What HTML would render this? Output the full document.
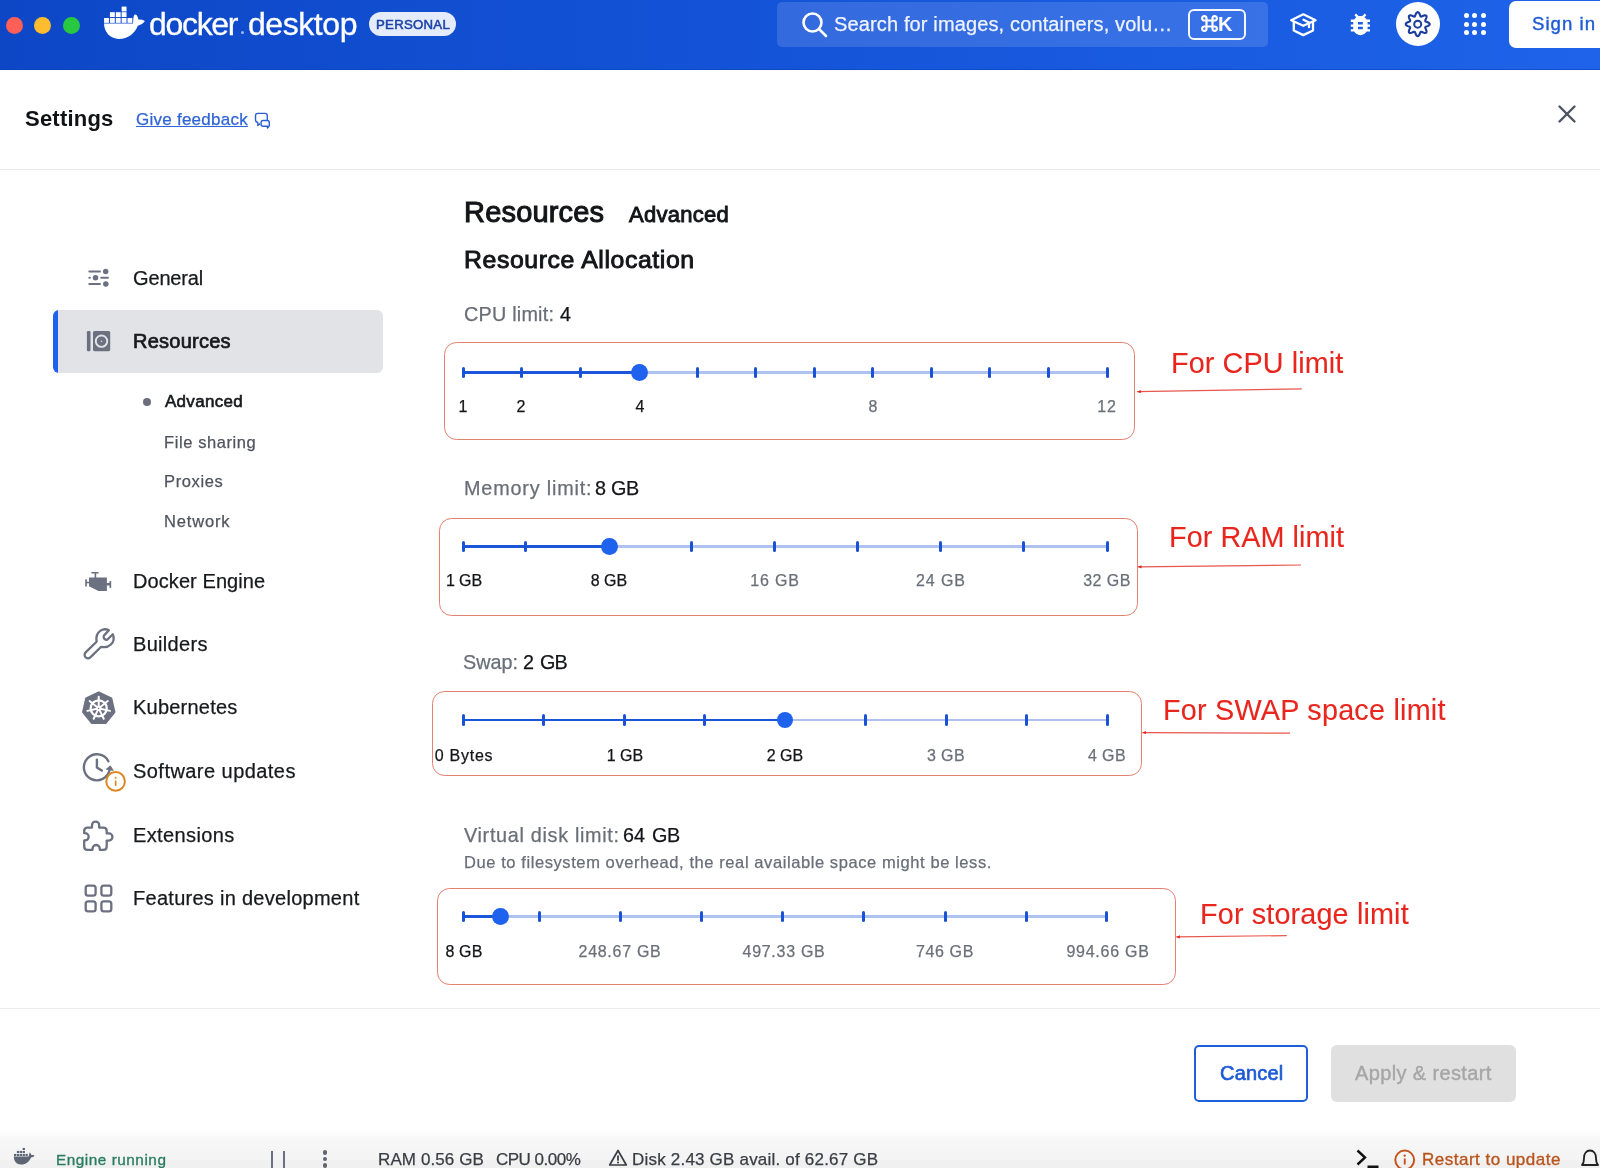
<!DOCTYPE html>
<html><head><meta charset="utf-8"><title>Docker Desktop Settings</title>
<style>
html,body{margin:0;padding:0;width:1600px;height:1168px;overflow:hidden;background:#fff;}
body{position:relative;font-family:"Liberation Sans",sans-serif;}
.t{position:absolute;line-height:1;white-space:nowrap;will-change:transform;}
.a{position:absolute;}
</style></head><body>
<div class='a' style='left:0;top:0;width:1600px;height:70px;background:linear-gradient(90deg,#0d47c6 0%,#1250d3 35%,#185ae0 70%,#1e63e9 100%);'></div>
<div class='a' style='left:0;top:69px;width:1600px;height:1px;background:#0b43b8;opacity:.6'></div>
<div class='a' style='left:5.699999999999999px;top:17.2px;width:17px;height:17px;border-radius:50%;background:#fe5f57'></div>
<div class='a' style='left:34.3px;top:17.2px;width:17px;height:17px;border-radius:50%;background:#febc2e'></div>
<div class='a' style='left:62.900000000000006px;top:17.2px;width:17px;height:17px;border-radius:50%;background:#28c840'></div>
<svg class='a' style='left:100px;top:4px' width='50' height='40' viewBox='100 4 50 40'>
<g fill='#fff'><rect x='104.10' y='18.0' width='4.85' height='4.85'/><rect x='109.95' y='18.0' width='4.85' height='4.85'/><rect x='115.80' y='18.0' width='4.85' height='4.85'/><rect x='121.65' y='18.0' width='4.85' height='4.85'/><rect x='127.50' y='18.0' width='4.85' height='4.85'/><rect x='109.95' y='12.2' width='4.85' height='4.85'/><rect x='115.80' y='12.2' width='4.85' height='4.85'/><rect x='121.65' y='12.2' width='4.85' height='4.85'/><rect x='121.65' y='6.6' width='4.85' height='4.85'/>
<path d='M104 23.6 H133 C133.2 21.5 133.3 18.5 133.7 16.2 C134.3 14.2 135.8 13.9 136.8 15.3 C137.6 16.5 138.1 18 138.4 19.6 C140.6 19.4 142.8 19.9 144.9 21 C143.6 23.4 140.6 24.8 137.8 25.7 C135 33.2 128 38.9 118.8 38.9 C110 38.9 104.2 32.2 104 23.6 Z'/>
</g></svg>
<div class='a' style='left:240.5px;top:31px;width:3px;height:3px;border-radius:50%;background:#9fb6ee'></div>
<div class='a' style='left:368.6px;top:12.4px;width:87.4px;height:23.6px;border-radius:12px;background:#e4ebfb'></div>
<div class='a' style='left:776.8px;top:1.6px;width:491.4px;height:45.4px;border-radius:5px;background:rgba(255,255,255,0.135)'></div>
<svg class='a' style='left:800px;top:10px' width='30' height='30' viewBox='0 0 30 30'>
<circle cx='12.5' cy='12.5' r='9' fill='none' stroke='#fff' stroke-width='2.6'/>
<line x1='19' y1='19' x2='26' y2='26' stroke='#fff' stroke-width='2.6' stroke-linecap='round'/></svg>
<div class='a' style='left:1188.4px;top:9px;width:53.4px;height:27.4px;border:2px solid rgba(255,255,255,.95);border-radius:6px'></div>
<svg class='a' style='left:1201px;top:15px' width='17' height='17' viewBox='0 0 17 17'>
<path d='M5.5 5.5 H11.5 V11.5 H5.5 Z M5.5 5.5 V3.5 A2.2 2.2 0 1 0 3.5 5.5 H5.5 M11.5 5.5 V3.5 A2.2 2.2 0 1 1 13.5 5.5 H11.5 M11.5 11.5 V13.5 A2.2 2.2 0 1 0 13.5 11.5 H11.5 M5.5 11.5 V13.5 A2.2 2.2 0 1 1 3.5 11.5 H5.5' fill='none' stroke='#fff' stroke-width='2.2'/></svg>
<svg class='a' style='left:1285px;top:5px' width='36' height='36' viewBox='1285 5 36 36'>
<g fill='none' stroke='#fff' stroke-width='2.3' stroke-linejoin='round' stroke-linecap='round'>
<path d='M1291.2 20.3 L1303.3 14.3 L1315.6 20.3 L1303.3 25.8 Z'/><path d='M1293.8 21.9 V30.5 L1303.3 35.1 L1313 30.5 V21.9'/><path d='M1303.5 19.8 L1309 22.6 V27.2'/></g></svg>
<svg class='a' style='left:1345.7px;top:9.9px' width='28.8' height='28.8' viewBox='0 0 24 24'>
<path fill='#fff' d='M20 8h-2.81c-.45-.78-1.07-1.45-1.82-1.96L17 4.41 15.59 3l-2.17 2.17C12.96 5.06 12.49 5 12 5s-.96.06-1.410.17L8.41 3 7 4.410l1.62 1.63C7.88 6.55 7.26 7.22 6.81 8H4v2h2.09c-.05.33-.09.66-.09 1v1H4v2h2v1c0 .34.04.67.09 1H4v2h2.81c1.04 1.79 2.970 3 5.19 3s4.15-1.21 5.19-3H20v-2h-2.09c.05-.33.09-.66.09-1v-1h2v-2h-2v-1c0-.34-.04-.67-.09-1H20V8zm-6 8h-4v-2h4v2zm0-4h-4v-2h4v2z'/></svg>
<div class='a' style='left:1395.6px;top:1.8px;width:44.5px;height:44.5px;border-radius:50%;background:#fff'></div>
<svg class='a' style='left:1395px;top:0px' width='46' height='48' viewBox='1395 0 46 48'>
<path fill='none' stroke='#1b3d9e' stroke-width='2.1' stroke-linejoin='round' d='M1429.70 24.15 L1429.60 24.62 L1429.30 25.06 L1428.84 25.47 L1428.26 25.82 L1427.61 26.12 L1426.95 26.37 L1426.35 26.59 L1425.84 26.80 L1425.48 27.02 L1425.28 27.29 L1425.23 27.62 L1425.33 28.04 L1425.54 28.54 L1425.81 29.12 L1426.10 29.76 L1426.35 30.43 L1426.51 31.09 L1426.55 31.71 L1426.44 32.23 L1426.19 32.64 L1425.78 32.89 L1425.26 33.00 L1424.64 32.96 L1423.98 32.80 L1423.31 32.55 L1422.67 32.26 L1422.09 31.99 L1421.59 31.78 L1421.17 31.68 L1420.84 31.73 L1420.57 31.93 L1420.35 32.29 L1420.14 32.80 L1419.92 33.40 L1419.67 34.06 L1419.37 34.71 L1419.02 35.29 L1418.61 35.75 L1418.17 36.05 L1417.70 36.15 L1417.23 36.05 L1416.79 35.75 L1416.38 35.29 L1416.03 34.71 L1415.73 34.06 L1415.48 33.40 L1415.26 32.80 L1415.05 32.29 L1414.83 31.93 L1414.56 31.73 L1414.23 31.68 L1413.81 31.78 L1413.31 31.99 L1412.73 32.26 L1412.09 32.55 L1411.42 32.80 L1410.76 32.96 L1410.14 33.00 L1409.62 32.89 L1409.21 32.64 L1408.96 32.23 L1408.85 31.71 L1408.89 31.09 L1409.05 30.43 L1409.30 29.76 L1409.59 29.12 L1409.86 28.54 L1410.07 28.04 L1410.17 27.62 L1410.12 27.29 L1409.92 27.02 L1409.56 26.80 L1409.05 26.59 L1408.45 26.37 L1407.79 26.12 L1407.14 25.82 L1406.56 25.47 L1406.10 25.06 L1405.80 24.62 L1405.70 24.15 L1405.80 23.68 L1406.10 23.24 L1406.56 22.83 L1407.14 22.48 L1407.79 22.18 L1408.45 21.93 L1409.05 21.71 L1409.56 21.50 L1409.92 21.28 L1410.12 21.01 L1410.17 20.68 L1410.07 20.26 L1409.86 19.76 L1409.59 19.18 L1409.30 18.54 L1409.05 17.87 L1408.89 17.21 L1408.85 16.59 L1408.96 16.07 L1409.21 15.66 L1409.62 15.41 L1410.14 15.30 L1410.76 15.34 L1411.42 15.50 L1412.09 15.75 L1412.73 16.04 L1413.31 16.31 L1413.81 16.52 L1414.23 16.62 L1414.56 16.57 L1414.83 16.37 L1415.05 16.01 L1415.26 15.50 L1415.48 14.90 L1415.73 14.24 L1416.03 13.59 L1416.38 13.01 L1416.79 12.55 L1417.23 12.25 L1417.70 12.15 L1418.17 12.25 L1418.61 12.55 L1419.02 13.01 L1419.37 13.59 L1419.67 14.24 L1419.92 14.90 L1420.14 15.50 L1420.35 16.01 L1420.57 16.37 L1420.84 16.57 L1421.17 16.62 L1421.59 16.52 L1422.09 16.31 L1422.67 16.04 L1423.31 15.75 L1423.98 15.50 L1424.64 15.34 L1425.26 15.30 L1425.78 15.41 L1426.19 15.66 L1426.44 16.07 L1426.55 16.59 L1426.51 17.21 L1426.35 17.87 L1426.10 18.54 L1425.81 19.18 L1425.54 19.76 L1425.33 20.26 L1425.23 20.68 L1425.28 21.01 L1425.48 21.28 L1425.84 21.50 L1426.35 21.71 L1426.95 21.93 L1427.61 22.18 L1428.26 22.48 L1428.84 22.83 L1429.30 23.24 L1429.60 23.68 L1429.70 24.15Z'/>
<circle cx='1417.7' cy='24.15' r='3.5' fill='none' stroke='#1b3d9e' stroke-width='2'/></svg>
<div class='a' style='left:1463.8px;top:13.4px;width:5px;height:5px;border-radius:50%;background:#fff'></div>
<div class='a' style='left:1472.2px;top:13.4px;width:5px;height:5px;border-radius:50%;background:#fff'></div>
<div class='a' style='left:1480.6px;top:13.4px;width:5px;height:5px;border-radius:50%;background:#fff'></div>
<div class='a' style='left:1463.8px;top:21.55px;width:5px;height:5px;border-radius:50%;background:#fff'></div>
<div class='a' style='left:1472.2px;top:21.55px;width:5px;height:5px;border-radius:50%;background:#fff'></div>
<div class='a' style='left:1480.6px;top:21.55px;width:5px;height:5px;border-radius:50%;background:#fff'></div>
<div class='a' style='left:1463.8px;top:29.700000000000003px;width:5px;height:5px;border-radius:50%;background:#fff'></div>
<div class='a' style='left:1472.2px;top:29.700000000000003px;width:5px;height:5px;border-radius:50%;background:#fff'></div>
<div class='a' style='left:1480.6px;top:29.700000000000003px;width:5px;height:5px;border-radius:50%;background:#fff'></div>
<div class='a' style='left:1509px;top:1.2px;width:110px;height:46.6px;border-radius:7px;background:#fff'></div>
<svg class='a' style='left:250px;top:106px' width='26' height='26' viewBox='250 106 26 26'>
<g fill='none' stroke='#2a5fd0' stroke-width='1.4' stroke-linejoin='round'>
<path d='M260.3 123.6 L257.8 125.4 V122.4 Q255.5 122 255.5 119.8 V115.6 Q255.5 113.4 257.7 113.4 H265 Q267.3 113.4 267.3 115.6 V120.4'/>
<path d='M263.1 120.5 H267.3 Q269.3 120.5 269.3 122.5 V125.7 L267.5 128 V126.2 H263.1 Q261.1 126.2 261.1 124.2 V122.5 Q261.1 120.5 263.1 120.5 Z'/></g></svg>
<svg class='a' style='left:1557px;top:104px' width='20' height='20' viewBox='0 0 20 20'>
<g stroke='#4d5462' stroke-width='2.4' stroke-linecap='round'><line x1='2.5' y1='2.5' x2='17.5' y2='17.5'/><line x1='17.5' y1='2.5' x2='2.5' y2='17.5'/></g></svg>
<div class='a' style='left:0;top:169px;width:1600px;height:1px;background:#e9e9ec'></div>
<div class='a' style='left:53px;top:310.3px;width:329.5px;height:62.3px;border-radius:6px;background:#e1e3e6;overflow:hidden'><div style='position:absolute;left:0;top:0;width:4.6px;height:100%;background:#1d63ed'></div></div>
<div class='a' style='left:143.1px;top:397.6px;width:8px;height:8px;border-radius:50%;background:#6b6e7d'></div>
<svg class='a' style='left:80px;top:262px' width='36' height='30' viewBox='80 262 36 30'>
<g stroke='#6b7180' stroke-width='1.9' stroke-linecap='round'><line x1='89.3' y1='271.5' x2='100' y2='271.5'/><line x1='89.3' y1='277.8' x2='89.9' y2='277.8'/><line x1='101.2' y1='277.8' x2='108' y2='277.8'/><line x1='89.3' y1='284' x2='100' y2='284'/></g>
<g fill='#6b7180'><circle cx='105.7' cy='271.5' r='2.75'/><circle cx='95.5' cy='277.8' r='2.75'/><circle cx='105.8' cy='284' r='2.75'/></g></svg>
<svg class='a' style='left:82px;top:325px' width='34' height='32' viewBox='82 325 34 32'>
<rect x='86.9' y='331' width='3.6' height='20.2' rx='1.2' fill='#6b7180'/>
<rect x='93' y='331' width='17.2' height='20.2' rx='1.6' fill='#6b7180'/>
<circle cx='101.5' cy='341.2' r='5.7' fill='none' stroke='#e1e3e6' stroke-width='1.9'/><circle cx='101.5' cy='341.2' r='0.8' fill='#e1e3e6'/></svg>
<svg class='a' style='left:80px;top:565px' width='36' height='34' viewBox='80 565 36 34'>
<g fill='#6b7180'><rect x='91.3' y='571.9' width='7.4' height='1.7' rx='.6'/><rect x='94.6' y='572.5' width='1.6' height='5.6'/>
<path d='M89 577.6 H106.9 V590.9 H98.4 L89 586.3 Z'/>
<rect x='85.2' y='579.2' width='1.7' height='7.4' rx='.5'/><rect x='86' y='581.8' width='3.5' height='1.5'/>
<rect x='109.5' y='580.9' width='1.7' height='7' rx='.5'/><rect x='106' y='582.9' width='4' height='2.6'/></g></svg>
<svg class='a' style='left:78px;top:624px' width='42' height='40' viewBox='78 624 42 40'>
<path fill='none' stroke='#6b7180' stroke-width='2.3' stroke-linejoin='round' d='M85.6 652.4 L96.6 641.7 C95.9 637.5 96.8 633 100.6 630.6 C103 629.1 106.2 628.9 108.9 630.3 L104.1 635.4 C103.2 636.6 103.6 638.5 104.9 639.3 C105.9 640 107.2 639.9 108 639 L112.8 634.2 C114.1 637.3 113.9 641.6 110.9 644.5 C108.3 647 104.6 647.6 101.2 646.8 L90.3 657.4 C88.9 658.8 86.7 658.6 85.5 657.3 C84.3 656 84.3 653.8 85.6 652.4 Z'/></svg>
<svg class='a' style='left:78px;top:687px' width='42' height='42' viewBox='78 687 42 42'>
<path fill='#6b7180' stroke='#6b7180' stroke-width='2.2' stroke-linejoin='round' d='M98.75 692.50 L111.26 698.52 L114.35 712.06 L105.69 722.92 L91.81 722.92 L83.15 712.06 L86.24 698.52Z'/>
<g fill='none' stroke='#fff'><circle cx='98.7' cy='708.3' r='8.0' stroke-width='2.3'/><circle cx='98.7' cy='708.3' r='1.7' stroke-width='1.6'/></g>
<g stroke='#fff' stroke-width='2' stroke-linecap='round'><line x1='98.70' y1='706.50' x2='98.70' y2='696.70'/><line x1='100.11' y1='707.18' x2='107.77' y2='701.07'/><line x1='100.45' y1='708.70' x2='110.01' y2='710.88'/><line x1='99.48' y1='709.92' x2='103.73' y2='718.75'/><line x1='97.92' y1='709.92' x2='93.67' y2='718.75'/><line x1='96.95' y1='708.70' x2='87.39' y2='710.88'/><line x1='97.29' y1='707.18' x2='89.63' y2='701.07'/></g></svg>
<svg class='a' style='left:78px;top:748px' width='50' height='47' viewBox='78 748 50 47'>
<path fill='none' stroke='#6b7180' stroke-width='2.4' stroke-linecap='round' d='M108.38 761.2 A13 13 0 1 0 109.7 769.56'/>
<path fill='none' stroke='#6b7180' stroke-width='2.4' stroke-linecap='round' stroke-linejoin='round' d='M96.9 759.6 V767.4 L101.8 770.6'/>
<path fill='#6b7180' stroke='#6b7180' stroke-width='0.8' stroke-linejoin='round' d='M110.3 765.8 L113.3 770.4 L106.2 769.2 Z'/>
<circle cx='115.6' cy='781.4' r='9.3' fill='#fff' stroke='#dd8721' stroke-width='2'/>
<rect x='114.8' y='780.6' width='1.7' height='5.2' fill='#dd8721'/><circle cx='115.65' cy='777.7' r='1' fill='#dd8721'/></svg>
<svg class='a' style='left:78px;top:815px' width='42' height='42' viewBox='78 815 42 42'>
<path fill='none' stroke='#6b7180' stroke-width='2.3' stroke-linejoin='round' d='M84.2 831 Q84.2 827.6 87.6 827.6 H92 V825.2 A3.6 3.6 0 0 1 99.2 825.2 V827.6 H103.3 Q106.7 827.6 106.7 831 V833.4 H108.9 A3.6 3.6 0 0 1 108.9 840.6 H106.7 V846.4 Q106.7 849.8 103.3 849.8 H99.75 V848.6 A3.6 3.6 0 0 0 92.55 848.6 V849.8 H87.6 Q84.2 849.8 84.2 846.4 V840.4 H85.1 A3.6 3.6 0 0 0 85.1 833.2 H84.2 Z'/></svg>
<svg class='a' style='left:80px;top:880px' width='38' height='38' viewBox='80 880 38 38'>
<g fill='none' stroke='#6b7180' stroke-width='2.3'><rect x='85.7' y='885.7' width='9.9' height='9.9' rx='2.4'/><rect x='101.4' y='885.7' width='9.9' height='9.9' rx='2.4'/><rect x='85.7' y='901.4' width='9.9' height='9.9' rx='2.4'/><rect x='101.4' y='901.4' width='9.9' height='9.9' rx='2.4'/></g></svg>
<div class='a' style='left:444.1px;top:341.85px;width:690.95px;height:97.8px;border:1.3px solid #e4806f;border-radius:12.5px;box-sizing:border-box'></div>
<div class='a' style='left:438.85px;top:517.95px;width:698.8px;height:97.69999999999997px;border:1.3px solid #e4806f;border-radius:12.5px;box-sizing:border-box'></div>
<div class='a' style='left:431.85px;top:690.65px;width:710.5999999999999px;height:85.50000000000004px;border:1.3px solid #e4806f;border-radius:12.5px;box-sizing:border-box'></div>
<div class='a' style='left:437.35px;top:888.35px;width:739.0999999999999px;height:96.3px;border:1.3px solid #e4806f;border-radius:12.5px;box-sizing:border-box'></div>
<div class='a' style='left:463.0px;top:371.1px;width:644.05px;height:2.8px;background:#adc2ef'></div>
<div class='a' style='left:463.0px;top:371.1px;width:176.60000000000002px;height:2.8px;background:#1c56d8'></div>
<div class='a' style='left:461.5px;top:366.9px;width:3px;height:11.2px;border-radius:1.5px;background:#1a52d6'></div>
<div class='a' style='left:520.05px;top:366.9px;width:3px;height:11.2px;border-radius:1.5px;background:#1a52d6'></div>
<div class='a' style='left:578.6px;top:366.9px;width:3px;height:11.2px;border-radius:1.5px;background:#1a52d6'></div>
<div class='a' style='left:637.15px;top:366.9px;width:3px;height:11.2px;border-radius:1.5px;background:#1a52d6'></div>
<div class='a' style='left:695.7px;top:366.9px;width:3px;height:11.2px;border-radius:1.5px;background:#1a52d6'></div>
<div class='a' style='left:754.25px;top:366.9px;width:3px;height:11.2px;border-radius:1.5px;background:#1a52d6'></div>
<div class='a' style='left:812.8px;top:366.9px;width:3px;height:11.2px;border-radius:1.5px;background:#1a52d6'></div>
<div class='a' style='left:871.3499999999999px;top:366.9px;width:3px;height:11.2px;border-radius:1.5px;background:#1a52d6'></div>
<div class='a' style='left:929.9px;top:366.9px;width:3px;height:11.2px;border-radius:1.5px;background:#1a52d6'></div>
<div class='a' style='left:988.4499999999999px;top:366.9px;width:3px;height:11.2px;border-radius:1.5px;background:#1a52d6'></div>
<div class='a' style='left:1047.0px;top:366.9px;width:3px;height:11.2px;border-radius:1.5px;background:#1a52d6'></div>
<div class='a' style='left:1105.55px;top:366.9px;width:3px;height:11.2px;border-radius:1.5px;background:#1a52d6'></div>
<div class='a' style='left:631.2px;top:364.1px;width:16.8px;height:16.8px;border-radius:50%;background:#1f62ee'></div>
<div class='a' style='left:463.0px;top:544.9px;width:644.0px;height:2.8px;background:#adc2ef'></div>
<div class='a' style='left:463.0px;top:544.9px;width:146.20000000000005px;height:2.8px;background:#1c56d8'></div>
<div class='a' style='left:461.5px;top:540.6999999999999px;width:3px;height:11.2px;border-radius:1.5px;background:#1a52d6'></div>
<div class='a' style='left:523.8225806451613px;top:540.6999999999999px;width:3px;height:11.2px;border-radius:1.5px;background:#1a52d6'></div>
<div class='a' style='left:606.9193548387096px;top:540.6999999999999px;width:3px;height:11.2px;border-radius:1.5px;background:#1a52d6'></div>
<div class='a' style='left:690.016129032258px;top:540.6999999999999px;width:3px;height:11.2px;border-radius:1.5px;background:#1a52d6'></div>
<div class='a' style='left:773.1129032258065px;top:540.6999999999999px;width:3px;height:11.2px;border-radius:1.5px;background:#1a52d6'></div>
<div class='a' style='left:856.2096774193549px;top:540.6999999999999px;width:3px;height:11.2px;border-radius:1.5px;background:#1a52d6'></div>
<div class='a' style='left:939.3064516129032px;top:540.6999999999999px;width:3px;height:11.2px;border-radius:1.5px;background:#1a52d6'></div>
<div class='a' style='left:1022.4032258064516px;top:540.6999999999999px;width:3px;height:11.2px;border-radius:1.5px;background:#1a52d6'></div>
<div class='a' style='left:1105.5px;top:540.6999999999999px;width:3px;height:11.2px;border-radius:1.5px;background:#1a52d6'></div>
<div class='a' style='left:600.8000000000001px;top:537.9px;width:16.8px;height:16.8px;border-radius:50%;background:#1f62ee'></div>
<div class='a' style='left:463.0px;top:718.6px;width:644.0px;height:2.8px;background:#adc2ef'></div>
<div class='a' style='left:463.0px;top:718.6px;width:322.0px;height:2.8px;background:#1c56d8'></div>
<div class='a' style='left:461.5px;top:714.4px;width:3px;height:11.2px;border-radius:1.5px;background:#1a52d6'></div>
<div class='a' style='left:542.0px;top:714.4px;width:3px;height:11.2px;border-radius:1.5px;background:#1a52d6'></div>
<div class='a' style='left:622.5px;top:714.4px;width:3px;height:11.2px;border-radius:1.5px;background:#1a52d6'></div>
<div class='a' style='left:703.0px;top:714.4px;width:3px;height:11.2px;border-radius:1.5px;background:#1a52d6'></div>
<div class='a' style='left:783.5px;top:714.4px;width:3px;height:11.2px;border-radius:1.5px;background:#1a52d6'></div>
<div class='a' style='left:864.0px;top:714.4px;width:3px;height:11.2px;border-radius:1.5px;background:#1a52d6'></div>
<div class='a' style='left:944.5px;top:714.4px;width:3px;height:11.2px;border-radius:1.5px;background:#1a52d6'></div>
<div class='a' style='left:1025.0px;top:714.4px;width:3px;height:11.2px;border-radius:1.5px;background:#1a52d6'></div>
<div class='a' style='left:1105.5px;top:714.4px;width:3px;height:11.2px;border-radius:1.5px;background:#1a52d6'></div>
<div class='a' style='left:776.6px;top:711.6px;width:16.8px;height:16.8px;border-radius:50%;background:#1f62ee'></div>
<div class='a' style='left:463px;top:914.9px;width:643.5px;height:2.8px;background:#adc2ef'></div>
<div class='a' style='left:463px;top:914.9px;width:37.39999999999998px;height:2.8px;background:#1c56d8'></div>
<div class='a' style='left:461.5px;top:910.6999999999999px;width:3px;height:11.2px;border-radius:1.5px;background:#1a52d6'></div>
<div class='a' style='left:537.8px;top:910.6999999999999px;width:3px;height:11.2px;border-radius:1.5px;background:#1a52d6'></div>
<div class='a' style='left:618.5px;top:910.6999999999999px;width:3px;height:11.2px;border-radius:1.5px;background:#1a52d6'></div>
<div class='a' style='left:699.8px;top:910.6999999999999px;width:3px;height:11.2px;border-radius:1.5px;background:#1a52d6'></div>
<div class='a' style='left:780.8px;top:910.6999999999999px;width:3px;height:11.2px;border-radius:1.5px;background:#1a52d6'></div>
<div class='a' style='left:862.2px;top:910.6999999999999px;width:3px;height:11.2px;border-radius:1.5px;background:#1a52d6'></div>
<div class='a' style='left:943.5px;top:910.6999999999999px;width:3px;height:11.2px;border-radius:1.5px;background:#1a52d6'></div>
<div class='a' style='left:1024.5px;top:910.6999999999999px;width:3px;height:11.2px;border-radius:1.5px;background:#1a52d6'></div>
<div class='a' style='left:1105.0px;top:910.6999999999999px;width:3px;height:11.2px;border-radius:1.5px;background:#1a52d6'></div>
<div class='a' style='left:492.0px;top:907.9px;width:16.8px;height:16.8px;border-radius:50%;background:#1f62ee'></div>
<svg class='a' style='left:0;top:0' width='1600' height='1168'><line x1='1301.8' y1='388.9' x2='1137.2' y2='391.7' stroke='#e8564e' stroke-width='1.2'/><path d='M1137.2 391.7 l3.6 -1.6 v3.2 z' fill='#e8261d'/><line x1='1301' y1='565' x2='1137.9' y2='566.8' stroke='#e8564e' stroke-width='1.2'/><path d='M1137.9 566.8 l3.6 -1.6 v3.2 z' fill='#e8261d'/><line x1='1290' y1='733.2' x2='1142.4' y2='732.6' stroke='#e8564e' stroke-width='1.2'/><path d='M1142.4 732.6 l3.6 -1.6 v3.2 z' fill='#e8261d'/><line x1='1286.75' y1='935.6' x2='1176.25' y2='936.9' stroke='#e8564e' stroke-width='1.2'/><path d='M1176.25 936.9 l3.6 -1.6 v3.2 z' fill='#e8261d'/></svg>
<div class='a' style='left:0;top:1008px;width:1600px;height:1px;background:#ececee'></div>
<div class='a' style='left:1193.6px;top:1044.9px;width:114.4px;height:56.9px;border:2.2px solid #1d5fdb;border-radius:5px;box-sizing:border-box'></div>
<div class='a' style='left:1331.4px;top:1044.9px;width:184.4px;height:57.3px;background:#e0e0e0;border-radius:6px'></div>
<div class='a' style='left:0;top:1130px;width:1600px;height:38px;background:linear-gradient(180deg,#ffffff 0px,#fdfdfd 2.5px,#f7f7f7 10px,#f5f5f5 20px,#f4f4f4 29.5px,#f0f0f0 30.5px,#f0f0f0 38px)'></div>
<svg class='a' style='left:8px;top:1140px' width='32' height='28' viewBox='8 1140 32 28'>
<g fill='#5e6676'><rect x='14.00' y='1153.9' width='2.3' height='2.1'/><rect x='16.87' y='1153.9' width='2.3' height='2.1'/><rect x='19.74' y='1153.9' width='2.3' height='2.1'/><rect x='22.61' y='1153.9' width='2.3' height='2.1'/><rect x='25.48' y='1153.9' width='2.3' height='2.1'/><rect x='16.87' y='1150.9' width='2.3' height='2.1'/><rect x='19.74' y='1150.9' width='2.3' height='2.1'/><rect x='22.61' y='1150.9' width='2.3' height='2.1'/><rect x='22.61' y='1147.9' width='2.3' height='2.1'/>
<path d='M13.8 1156.6 H28.6 C29 1155.5 29.3 1154.3 29.5 1152.6 C30.6 1153.3 31.2 1154.2 31.5 1155.2 C32.5 1155 33.5 1155.1 34.4 1155.6 C33.8 1157 32.4 1157.5 31 1157.5 C29.5 1161.5 26 1164.6 21 1164.6 C16.5 1164.6 13.9 1161.5 13.8 1156.6 Z'/></g></svg>
<div class='a' style='left:271.4px;top:1150.75px;width:2px;height:20px;background:#6b7080'></div>
<div class='a' style='left:283.4px;top:1150.75px;width:2px;height:20px;background:#6b7080'></div>
<div class='a' style='left:322.7px;top:1150.3px;width:4.4px;height:4.4px;border-radius:50%;background:#5e6470'></div>
<div class='a' style='left:322.7px;top:1156.8px;width:4.4px;height:4.4px;border-radius:50%;background:#5e6470'></div>
<div class='a' style='left:322.7px;top:1163.3999999999999px;width:4.4px;height:4.4px;border-radius:50%;background:#5e6470'></div>
<svg class='a' style='left:608px;top:1148px' width='20' height='20' viewBox='0 0 20 20'>
<path d='M10 2.5 L18.3 17 H1.7 Z' fill='none' stroke='#3a3d43' stroke-width='1.7' stroke-linejoin='round'/><rect x='9.1' y='7.5' width='1.8' height='5.2' fill='#3a3d43'/><circle cx='10' cy='14.6' r='1' fill='#3a3d43'/></svg>
<svg class='a' style='left:1354px;top:1148px' width='28' height='20' viewBox='0 0 28 20'>
<path d='M3.5 2.5 L11 9.5 L3.5 16.5' fill='none' stroke='#111' stroke-width='2.4' stroke-linejoin='miter'/><rect x='13.5' y='17.5' width='11' height='2.5' fill='#111'/></svg>
<svg class='a' style='left:1393px;top:1148px' width='24' height='24' viewBox='0 0 24 24'>
<circle cx='11.7' cy='12' r='9.4' fill='none' stroke='#c0561e' stroke-width='2'/><rect x='10.8' y='10.5' width='1.9' height='6' fill='#c0561e'/><circle cx='11.7' cy='7.6' r='1.2' fill='#c0561e'/></svg>
<svg class='a' style='left:1578px;top:1148px' width='24' height='22' viewBox='0 0 24 22'>
<path d='M4 17 C5.5 15.5 6 13 6 10 C6 5.5 8.5 2.5 12 2.5 C15.5 2.5 18 5.5 18 10 C18 13 18.5 15.5 20 17 Z' fill='none' stroke='#222' stroke-width='1.8' stroke-linejoin='round'/></svg>
<div class='t' id='t0' style='left:149.08px;top:7.71px;font-size:32px;font-weight:400;color:#ffffff;letter-spacing:-1.320px;-webkit-text-stroke:0.3px #ffffff;'>docker</div>
<div class='t' id='t1' style='left:248.08px;top:7.71px;font-size:32px;font-weight:400;color:#ffffff;letter-spacing:-0.433px;-webkit-text-stroke:0.3px #ffffff;'>desktop</div>
<div class='t' id='t2' style='left:376.12px;top:17.63px;font-size:13.2px;font-weight:400;color:#1d44a8;letter-spacing:0.271px;-webkit-text-stroke:0.55px #1d44a8;'>PERSONAL</div>
<div class='t' id='t3' style='left:834.20px;top:13.57px;font-size:20px;font-weight:400;color:#eef3ff;letter-spacing:0.137px;-webkit-text-stroke:0.25px #eef3ff;'>Search for images, containers, volu…</div>
<div class='t' id='t4' style='left:1218.00px;top:13.57px;font-size:20px;font-weight:700;color:#ffffff;letter-spacing:0.000px;'>K</div>
<div class='t' id='t5' style='left:1532.20px;top:15.46px;font-size:18.6px;font-weight:400;color:#1d5ad4;letter-spacing:1.033px;-webkit-text-stroke:0.4px #1d5ad4;'>Sign in</div>
<div class='t' id='t6' style='left:25.00px;top:107.68px;font-size:22px;font-weight:700;color:#111216;letter-spacing:0.214px;'>Settings</div>
<div class='t' id='t7' style='left:136.44px;top:110.61px;font-size:17px;font-weight:400;color:#2e64d4;letter-spacing:0.250px;text-decoration:underline;text-underline-offset:1.2px;text-decoration-thickness:1px;-webkit-text-stroke:0.25px #2e64d4;'>Give feedback</div>
<div class='t' id='t8' style='left:132.52px;top:268.37px;font-size:20px;font-weight:400;color:#17191c;letter-spacing:-0.150px;-webkit-text-stroke:0.25px #17191c;'>General</div>
<div class='t' id='t9' style='left:132.52px;top:331.37px;font-size:20px;font-weight:400;color:#17191c;letter-spacing:0.237px;-webkit-text-stroke:0.7px #17191c;'>Resources</div>
<div class='t' id='t10' style='left:132.52px;top:571.47px;font-size:20px;font-weight:400;color:#17191c;letter-spacing:0.083px;-webkit-text-stroke:0.25px #17191c;'>Docker Engine</div>
<div class='t' id='t11' style='left:132.52px;top:634.27px;font-size:20px;font-weight:400;color:#17191c;letter-spacing:0.314px;-webkit-text-stroke:0.25px #17191c;'>Builders</div>
<div class='t' id='t12' style='left:132.52px;top:697.07px;font-size:20px;font-weight:400;color:#17191c;letter-spacing:0.222px;-webkit-text-stroke:0.25px #17191c;'>Kubernetes</div>
<div class='t' id='t13' style='left:132.52px;top:761.47px;font-size:20px;font-weight:400;color:#17191c;letter-spacing:0.453px;-webkit-text-stroke:0.25px #17191c;'>Software updates</div>
<div class='t' id='t14' style='left:132.52px;top:824.87px;font-size:20px;font-weight:400;color:#17191c;letter-spacing:0.389px;-webkit-text-stroke:0.25px #17191c;'>Extensions</div>
<div class='t' id='t15' style='left:132.52px;top:888.07px;font-size:20px;font-weight:400;color:#17191c;letter-spacing:0.277px;-webkit-text-stroke:0.25px #17191c;'>Features in development</div>
<div class='t' id='t16' style='left:165.22px;top:393.11px;font-size:17px;font-weight:400;color:#17191c;letter-spacing:0.286px;-webkit-text-stroke:0.6px #17191c;'>Advanced</div>
<div class='t' id='t17' style='left:164.42px;top:433.53px;font-size:16.5px;font-weight:400;color:#4f545e;letter-spacing:0.591px;-webkit-text-stroke:0.25px #4f545e;'>File sharing</div>
<div class='t' id='t18' style='left:164.42px;top:473.23px;font-size:16.5px;font-weight:400;color:#4f545e;letter-spacing:0.633px;-webkit-text-stroke:0.25px #4f545e;'>Proxies</div>
<div class='t' id='t19' style='left:164.42px;top:513.33px;font-size:16.5px;font-weight:400;color:#4f545e;letter-spacing:0.833px;-webkit-text-stroke:0.25px #4f545e;'>Network</div>
<div class='t' id='t20' style='left:464.30px;top:198.45px;font-size:29px;font-weight:400;color:#141518;letter-spacing:0.188px;-webkit-text-stroke:1.05px #141518;'>Resources</div>
<div class='t' id='t21' style='left:629.24px;top:204.18px;font-size:22px;font-weight:400;color:#141518;letter-spacing:0.286px;-webkit-text-stroke:0.9px #141518;'>Advanced</div>
<div class='t' id='t22' style='left:464.30px;top:248.01px;font-size:24.8px;font-weight:400;color:#141518;letter-spacing:0.611px;-webkit-text-stroke:0.95px #141518;'>Resource Allocation</div>
<div class='t' id='t23' style='left:464.20px;top:305.24px;font-size:19.8px;font-weight:400;color:#696e77;letter-spacing:0.222px;-webkit-text-stroke:0.25px #696e77;'>CPU limit:</div>
<div class='t' id='t24' style='left:559.78px;top:305.24px;font-size:19.8px;font-weight:400;color:#141518;letter-spacing:0.000px;-webkit-text-stroke:0.25px #141518;'>4</div>
<div class='t' id='t25' style='left:463.64px;top:478.54px;font-size:19.8px;font-weight:400;color:#696e77;letter-spacing:0.833px;-webkit-text-stroke:0.25px #696e77;'>Memory limit:</div>
<div class='t' id='t26' style='left:594.88px;top:478.54px;font-size:19.8px;font-weight:400;color:#141518;letter-spacing:0.000px;-webkit-text-stroke:0.25px #141518;'>8</div>
<div class='t' id='t27' style='left:610.98px;top:478.54px;font-size:19.8px;font-weight:400;color:#141518;letter-spacing:-0.400px;-webkit-text-stroke:0.25px #141518;'>GB</div>
<div class='t' id='t28' style='left:463.30px;top:652.74px;font-size:19.8px;font-weight:400;color:#696e77;letter-spacing:-0.025px;-webkit-text-stroke:0.25px #696e77;'>Swap:</div>
<div class='t' id='t29' style='left:522.52px;top:652.74px;font-size:19.8px;font-weight:400;color:#141518;letter-spacing:0.000px;-webkit-text-stroke:0.25px #141518;'>2</div>
<div class='t' id='t30' style='left:539.98px;top:652.74px;font-size:19.8px;font-weight:400;color:#141518;letter-spacing:-1.000px;-webkit-text-stroke:0.25px #141518;'>GB</div>
<div class='t' id='t31' style='left:464.10px;top:825.94px;font-size:19.8px;font-weight:400;color:#696e77;letter-spacing:0.694px;-webkit-text-stroke:0.25px #696e77;'>Virtual disk limit:</div>
<div class='t' id='t32' style='left:623.08px;top:825.94px;font-size:19.8px;font-weight:400;color:#141518;letter-spacing:0.000px;-webkit-text-stroke:0.25px #141518;'>64</div>
<div class='t' id='t33' style='left:651.54px;top:825.94px;font-size:19.8px;font-weight:400;color:#141518;letter-spacing:-0.400px;-webkit-text-stroke:0.25px #141518;'>GB</div>
<div class='t' id='t34' style='left:463.86px;top:853.93px;font-size:16.5px;font-weight:400;color:#696e77;letter-spacing:0.583px;-webkit-text-stroke:0.25px #696e77;'>Due to filesystem overhead, the real available space might be less.</div>
<div class='t' id='t35' style='left:463.00px;top:399.26px;font-size:16px;font-weight:400;color:#141518;letter-spacing:0.000px;transform:translateX(-50%);-webkit-text-stroke:0.25px #141518;'>1</div>
<div class='t' id='t36' style='left:521.44px;top:399.26px;font-size:16px;font-weight:400;color:#141518;letter-spacing:0.000px;transform:translateX(-50%);-webkit-text-stroke:0.25px #141518;'>2</div>
<div class='t' id='t37' style='left:639.62px;top:399.26px;font-size:16px;font-weight:400;color:#141518;letter-spacing:0.000px;transform:translateX(-50%);-webkit-text-stroke:0.25px #141518;'>4</div>
<div class='t' id='t38' style='left:873.12px;top:399.26px;font-size:16px;font-weight:400;color:#6b7078;letter-spacing:0.000px;transform:translateX(-50%);-webkit-text-stroke:0.25px #6b7078;'>8</div>
<div class='t' id='t39' style='left:1106.88px;top:399.26px;font-size:16px;font-weight:400;color:#6b7078;letter-spacing:0.800px;transform:translateX(-50%);-webkit-text-stroke:0.25px #6b7078;'>12</div>
<div class='t' id='t40' style='left:463.55px;top:573.36px;font-size:16px;font-weight:400;color:#141518;letter-spacing:-0.167px;transform:translateX(-50%);-webkit-text-stroke:0.25px #141518;'>1 GB</div>
<div class='t' id='t41' style='left:609.13px;top:573.36px;font-size:16px;font-weight:400;color:#141518;letter-spacing:-0.033px;transform:translateX(-50%);-webkit-text-stroke:0.25px #141518;'>8 GB</div>
<div class='t' id='t42' style='left:775.40px;top:573.36px;font-size:16px;font-weight:400;color:#6b7078;letter-spacing:0.850px;transform:translateX(-50%);-webkit-text-stroke:0.25px #6b7078;'>16 GB</div>
<div class='t' id='t43' style='left:941.12px;top:573.36px;font-size:16px;font-weight:400;color:#6b7078;letter-spacing:0.900px;transform:translateX(-50%);-webkit-text-stroke:0.25px #6b7078;'>24 GB</div>
<div class='t' id='t44' style='left:1106.89px;top:573.36px;font-size:16px;font-weight:400;color:#6b7078;letter-spacing:0.475px;transform:translateX(-50%);-webkit-text-stroke:0.25px #6b7078;'>32 GB</div>
<div class='t' id='t45' style='left:464.18px;top:747.96px;font-size:16px;font-weight:400;color:#141518;letter-spacing:0.733px;transform:translateX(-50%);-webkit-text-stroke:0.25px #141518;'>0 Bytes</div>
<div class='t' id='t46' style='left:624.73px;top:747.96px;font-size:16px;font-weight:400;color:#141518;letter-spacing:0.000px;transform:translateX(-50%);-webkit-text-stroke:0.25px #141518;'>1 GB</div>
<div class='t' id='t47' style='left:784.83px;top:747.96px;font-size:16px;font-weight:400;color:#141518;letter-spacing:0.000px;transform:translateX(-50%);-webkit-text-stroke:0.25px #141518;'>2 GB</div>
<div class='t' id='t48' style='left:946.46px;top:747.96px;font-size:16px;font-weight:400;color:#6b7078;letter-spacing:0.333px;transform:translateX(-50%);-webkit-text-stroke:0.25px #6b7078;'>3 GB</div>
<div class='t' id='t49' style='left:1107.46px;top:747.96px;font-size:16px;font-weight:400;color:#6b7078;letter-spacing:0.333px;transform:translateX(-50%);-webkit-text-stroke:0.25px #6b7078;'>4 GB</div>
<div class='t' id='t50' style='left:464.01px;top:943.66px;font-size:16px;font-weight:400;color:#141518;letter-spacing:0.167px;transform:translateX(-50%);-webkit-text-stroke:0.25px #141518;'>8 GB</div>
<div class='t' id='t51' style='left:620.39px;top:943.66px;font-size:16px;font-weight:400;color:#6b7078;letter-spacing:0.713px;transform:translateX(-50%);-webkit-text-stroke:0.25px #6b7078;'>248.67 GB</div>
<div class='t' id='t52' style='left:783.75px;top:943.66px;font-size:16px;font-weight:400;color:#6b7078;letter-spacing:0.713px;transform:translateX(-50%);-webkit-text-stroke:0.25px #6b7078;'>497.33 GB</div>
<div class='t' id='t53' style='left:945.29px;top:943.66px;font-size:16px;font-weight:400;color:#6b7078;letter-spacing:0.600px;transform:translateX(-50%);-webkit-text-stroke:0.25px #6b7078;'>746 GB</div>
<div class='t' id='t54' style='left:1107.80px;top:943.66px;font-size:16px;font-weight:400;color:#6b7078;letter-spacing:0.750px;transform:translateX(-50%);-webkit-text-stroke:0.25px #6b7078;'>994.66 GB</div>
<div class='t' id='t55' style='left:1171.28px;top:348.52px;font-size:28.8px;font-weight:400;color:#e8261d;letter-spacing:0.092px;-webkit-text-stroke:0.1px #e8261d;'>For CPU limit</div>
<div class='t' id='t56' style='left:1169.40px;top:522.92px;font-size:28.8px;font-weight:400;color:#e8261d;letter-spacing:0.050px;-webkit-text-stroke:0.1px #e8261d;'>For RAM limit</div>
<div class='t' id='t57' style='left:1163.01px;top:696.22px;font-size:28.8px;font-weight:400;color:#e8261d;letter-spacing:0.211px;-webkit-text-stroke:0.1px #e8261d;'>For SWAP space limit</div>
<div class='t' id='t58' style='left:1200.06px;top:900.22px;font-size:28.8px;font-weight:400;color:#e8261d;letter-spacing:0.138px;-webkit-text-stroke:0.1px #e8261d;'>For storage limit</div>
<div class='t' id='t59' style='left:1220.12px;top:1063.17px;font-size:20px;font-weight:400;color:#1d5ad6;letter-spacing:0.200px;-webkit-text-stroke:0.65px #1d5ad6;'>Cancel</div>
<div class='t' id='t60' style='left:1355.00px;top:1063.17px;font-size:20px;font-weight:400;color:#a6a6a6;letter-spacing:0.364px;-webkit-text-stroke:0.4px #a6a6a6;'>Apply &amp; restart</div>
<div class='t' id='t61' style='left:55.98px;top:1152.25px;font-size:15.3px;font-weight:400;color:#2b7d62;letter-spacing:0.538px;-webkit-text-stroke:0.35px #2b7d62;'>Engine running</div>
<div class='t' id='t62' style='left:378.08px;top:1151.01px;font-size:17px;font-weight:400;color:#3a3d43;letter-spacing:0.100px;-webkit-text-stroke:0.25px #3a3d43;'>RAM 0.56 GB</div>
<div class='t' id='t63' style='left:496.00px;top:1151.01px;font-size:17px;font-weight:400;color:#3a3d43;letter-spacing:-0.500px;-webkit-text-stroke:0.25px #3a3d43;'>CPU 0.00%</div>
<div class='t' id='t64' style='left:631.98px;top:1151.01px;font-size:17px;font-weight:400;color:#3a3d43;letter-spacing:0.203px;-webkit-text-stroke:0.25px #3a3d43;'>Disk 2.43 GB avail. of 62.67 GB</div>
<div class='t' id='t65' style='left:1422.08px;top:1150.61px;font-size:17px;font-weight:400;color:#b9541d;letter-spacing:0.500px;-webkit-text-stroke:0.35px #b9541d;'>Restart to update</div>
</body></html>
